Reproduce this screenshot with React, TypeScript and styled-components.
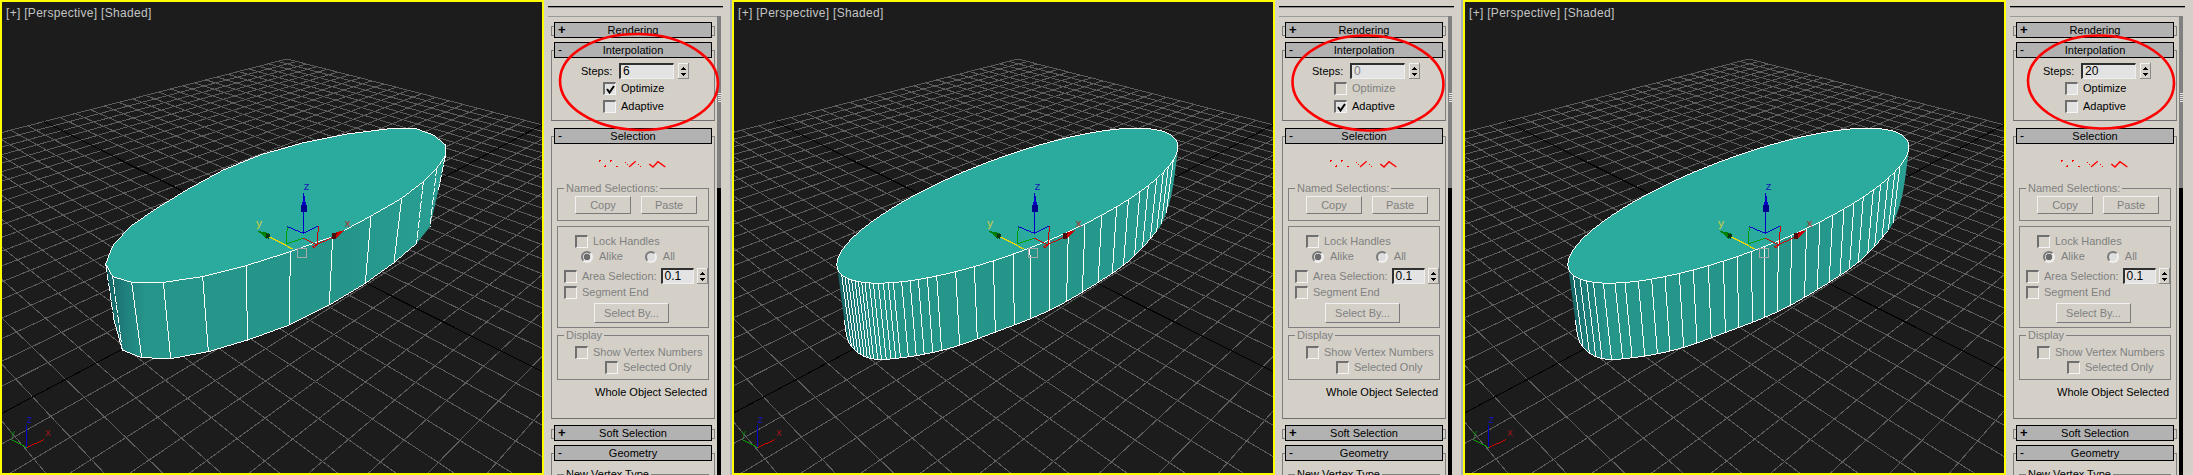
import React from 'react';
import styled, { createGlobalStyle } from 'styled-components';

const Global = createGlobalStyle`
  html, body { margin: 0; padding: 0; width: 2193px; height: 475px; overflow: hidden; background: #d4d0c8; }
  #root { width: 2193px; height: 475px; }
`;

const Page = styled.div`
  display: flex;
  width: 2193px;
  height: 475px;
  overflow: hidden;
  font-family: "Liberation Sans", Arial, sans-serif;
  font-size: 11px;
`;

const Unit = styled.section<{ $lead: boolean }>`
  display: flex;
  flex: 0 0 731px;
  height: 475px;
  box-sizing: border-box;
  padding-left: ${p => (p.$lead ? 1 : 0)}px;
  background: #a9aebc;
`;

const Viewport = styled.div`
  position: relative;
  flex: 1 1 0;
  min-width: 0;
  box-sizing: border-box;
  border: 2px solid #ffff00;
  background: #1c1c1c;
  overflow: hidden;
`;

const ViewLabel = styled.div`
  position: absolute;
  left: 4px;
  top: 4px;
  color: #c4c4c4;
  font-size: 12px;
  letter-spacing: 0.3px;
  line-height: 14px;
  white-space: pre;
`;

const Scene = styled.svg`
  display: block;
  width: 100%;
  height: 100%;
`;

const Panel = styled.aside<{ $strip: boolean }>`
  position: relative;
  flex: 0 0 187px;
  box-sizing: border-box;
  display: flex;
  flex-direction: column;
  background: #d4d0c8;
  border-right: ${p => (p.$strip ? 1 : 0)}px solid #a9aebc;
  color: #000;
`;

const Rule = styled.div`
  flex: none;
  width: 175px;
  height: 1px;
  margin: 6px 0 0 4px;
  background: #000;
  box-shadow: 0 1px 0 #8c8c8c;
`;

const PanelBody = styled.div`
  flex: 1 1 0;
  min-height: 0;
  display: flex;
  margin-top: 9px;
`;

const Column = styled.div`
  flex: 0 0 169px;
  margin-left: 4px;
  padding: 5px 0 0 3px;
  border-top: 1px solid #9a9a9a;
  box-sizing: border-box;
`;

const Track = styled.div`
  flex: 0 0 4px;
  display: flex;
  flex-direction: column;
  background: #000;
`;

const Thumb = styled.div`
  height: 172px;
  display: flex;
  align-items: center;
  justify-content: center;
  background: #808080;
`;

const Grip = styled.div`
  width: 3px;
  height: 10px;
  margin-bottom: 8px;
  background: repeating-linear-gradient(to bottom, #e8e8e8 0 1px, #808080 1px 2px);
`;

const Rollout = styled.div<{ $closed?: boolean; $gap: number }>`
  position: relative;
  width: 164px;
  margin-bottom: ${p => p.$gap}px;
  ${p =>
    p.$closed
      ? `&::before {
          content: '';
          position: absolute;
          left: 0; right: 0; top: 4px; height: 8px;
          border: 1px solid #7f7f7f;
        }`
      : ''}
`;

const Head = styled.div`
  position: relative;
  z-index: 1;
  height: 16px;
  box-sizing: border-box;
  margin: 0 3px;
  display: grid;
  grid-template-columns: 16px 1fr 16px;
  align-items: center;
  border: 1px solid #000;
  background: #b2b2b2;
  line-height: 14px;
`;

const Sign = styled.span<{ $open: boolean }>`
  padding-left: 3px;
  font-weight: ${p => (p.$open ? 400 : 700)};
  font-size: ${p => (p.$open ? 12 : 13)}px;
`;

const HeadText = styled.span`
  text-align: center;
  white-space: nowrap;
`;

const Body = styled.div<{ $height: number; $top: number }>`
  box-sizing: border-box;
  height: ${p => p.$height}px;
  margin-top: -8px;
  padding-top: ${p => p.$top}px;
  border: 1px solid #7f7f7f;
  border-bottom-color: #6e6e6e;
  overflow: hidden;
`;

const Row = styled.div<{ $indent: number; $after?: number; $h?: number }>`
  display: flex;
  align-items: center;
  height: ${p => p.$h ?? 13}px;
  padding-left: ${p => p.$indent}px;
  margin-bottom: ${p => p.$after ?? 0}px;
  white-space: nowrap;
`;

const Text = styled.span<{ $dim?: boolean; $gap?: number }>`
  margin-left: ${p => p.$gap ?? 5}px;
  color: ${p => (p.$dim ? '#808080' : '#000')};
  line-height: 13px;
`;

const StepsLabel = styled.span`
  width: 38px;
  color: #000;
`;

const Field = styled.div<{ $w: number; $dim?: boolean; $gap?: number }>`
  box-sizing: border-box;
  width: ${p => p.$w}px;
  height: 16px;
  margin-left: ${p => p.$gap ?? 0}px;
  padding: 0 0 0 2px;
  border-style: solid;
  border-width: 2px 1px 1px 2px;
  border-color: #303030 #efefef #efefef #303030;
  background: #e3e3e3;
  color: ${p => (p.$dim ? '#808080' : '#000')};
  font-size: 12px;
  line-height: 13px;
`;

const SpinBox = styled.svg<{ $gap: number }>`
  flex: none;
  display: block;
  width: 11px;
  height: 16px;
  margin-left: ${p => p.$gap}px;
`;

const Box = styled.div<{ $on?: boolean; $dim?: boolean }>`
  flex: none;
  box-sizing: border-box;
  width: 13px;
  height: 13px;
  border-style: solid;
  border-width: 2px 1px 1px 2px;
  border-color: #6f6f6f #f4f4f4 #f4f4f4 #6f6f6f;
  background: ${p => (p.$dim ? '#d4d0c8' : '#e2e2e2')};
  display: flex;
  align-items: center;
  justify-content: center;
`;

const Tick = styled.svg`
  display: block;
  width: 9px;
  height: 9px;
`;

const Radio = styled.div<{ $on?: boolean; $gap?: number }>`
  flex: none;
  box-sizing: border-box;
  width: 12px;
  height: 12px;
  margin-left: ${p => p.$gap ?? 0}px;
  border-radius: 50%;
  border: 2px solid;
  border-color: #7a7a7a #efefef #efefef #7a7a7a;
  background: ${p => (p.$on ? 'radial-gradient(circle, #6c6c6c 0 3px, #dcdcdc 3.5px)' : '#dedede')};
`;

const Group = styled.div<{ $height: number; $after: number; $top: number }>`
  position: relative;
  box-sizing: border-box;
  width: 152px;
  height: ${p => p.$height}px;
  margin: 0 0 ${p => p.$after}px 5px;
  padding-top: ${p => p.$top}px;
  border: 1px solid #7f7f7f;
`;

const Legend = styled.span<{ $dark?: boolean }>`
  position: absolute;
  left: 6px;
  top: -7px;
  padding: 0 2px;
  background: #d4d0c8;
  color: ${p => (p.$dark ? '#000' : '#808080')};
  line-height: 13px;
  white-space: nowrap;
`;

const Btn = styled.div<{ $w: number; $h: number; $gap?: number }>`
  flex: none;
  box-sizing: border-box;
  width: ${p => p.$w}px;
  height: ${p => p.$h}px;
  margin-left: ${p => p.$gap ?? 0}px;
  display: flex;
  align-items: center;
  justify-content: center;
  border-style: solid;
  border-width: 1px;
  border-color: #f1f1f1 #7a7a7a #7a7a7a #f1f1f1;
  color: #808080;
`;

const Icons = styled.svg`
  display: block;
  width: 68px;
  height: 10px;
  margin: 22px 0 19px 46px;
`;

const Status = styled.div`
  width: 155px;
  margin-top: 6px;
  text-align: right;
  color: #000;
  line-height: 13px;
  white-space: nowrap;
`;

const Halo = styled.svg`
  position: absolute;
  left: 0;
  top: 0;
  width: 187px;
  height: 160px;
  z-index: 2;
  pointer-events: none;
`;

type Pt = [number, number];

// ---------- grid ----------
const O: Pt = [304, 252];
const V1: Pt = [1017, -129];
const V2: Pt = [-469, -136];
const P0 = 0.5012;
const Q0 = 0.5065;
const N = 20;
const project = (u: number, v: number): Pt => {
  const p = (P0 / N) * u;
  const q = (Q0 / N) * v;
  const w = 1 + p + q;
  return [(O[0] + p * V1[0] + q * V2[0]) / w, (O[1] + p * V1[1] + q * V2[1]) / w];
};
const seg = (a: Pt, b: Pt) => `M${a[0].toFixed(1)} ${a[1].toFixed(1)}L${b[0].toFixed(1)} ${b[1].toFixed(1)}`;
const uLine = (i: number) => {
  const vMin = Math.max(-N, ((0.05 - 1 - (P0 * i) / N) * N) / Q0);
  return seg(project(i, vMin), project(i, N));
};
const vLine = (i: number) => {
  const uMin = Math.max(-N, ((0.05 - 1 - (Q0 * i) / N) * N) / P0);
  return seg(project(uMin, i), project(N, i));
};
let gridPath = '';
for (let i = -N; i <= N; i++) {
  if (i === 0) continue;
  gridPath += uLine(i) + vLine(i);
}
const axisPath = uLine(0) + vLine(0);

// ---------- object (coordinates are 3x, offset 90,120) ----------
const frontTop: Pt[] = [
  [47, 432], [68, 470], [125, 487], [220, 487], [338, 470], [468, 437], [601, 395],
  [728, 350], [843, 288], [935, 235], [1000, 185], [1040, 145], [1066, 108],
];
const frontBottom: Pt[] = [
  [72, 600], [97, 690], [155, 713], [242, 716], [355, 695], [473, 660], [598, 615],
  [718, 555], [826, 490], [912, 428], [980, 370], [1020, 320], [1045, 210],
];
const back: Pt[] = [
  [1067, 75], [1030, 45], [975, 25], [900, 26], [770, 42], [640, 68], [510, 105],
  [400, 150], [290, 210], [200, 265], [120, 320], [68, 378],
];

const toPath = (pts: Pt[], close = true) =>
  'M' + pts.map(p => `${p[0].toFixed(1)} ${p[1].toFixed(1)}`).join('L') + (close ? 'Z' : '');

const cr = (a: number, b: number, c: number, d: number, t: number) =>
  0.5 * (2 * b + (c - a) * t + (2 * a - 5 * b + 4 * c - d) * t * t + (3 * b - a - 3 * c + d) * t * t * t);

const spline = (pts: Pt[], steps = 8): Pt[] => {
  const out: Pt[] = [];
  const n = pts.length;
  for (let i = 0; i < n - 1; i++) {
    const a = pts[Math.max(0, i - 1)], b = pts[i], c = pts[i + 1], d = pts[Math.min(n - 1, i + 2)];
    for (let s = 0; s < steps; s++) {
      const t = s / steps;
      out.push([cr(a[0], b[0], c[0], d[0], t), cr(a[1], b[1], c[1], d[1], t)]);
    }
  }
  out.push(pts[n - 1]);
  return out;
};

// Smooth top cap: fitted ellipse. Lower rim: traced from the reference.
const topCap = (t: number): Pt => [
  559 + 511.5 * Math.cos(t),
  257 - 176.4 * Math.cos(t) + 151.5 * Math.sin(t),
];
const lowerRim = spline([
  [70, 600], [85, 670], [137, 712], [217, 716], [367, 690], [527, 635], [687, 570],
  [827, 490], [927, 420], [997, 345], [1027, 300], [1052, 220], [1068, 110],
]);

const rimY = (x: number) => {
  if (x <= lowerRim[0][0]) return lowerRim[0][1];
  for (let i = 1; i < lowerRim.length; i++) {
    const a = lowerRim[i - 1], b = lowerRim[i];
    if (x <= b[0]) return a[1] + ((b[1] - a[1]) * (x - a[0])) / Math.max(0.01, b[0] - a[0]);
  }
  return lowerRim[lowerRim.length - 1][1];
};

const clampCos = (c: number) => Math.max(-1, Math.min(1, c));

const sideLine = (x: number): [Pt, Pt] => {
  const top = topCap(Math.acos(clampCos((x - 559) / 511.5)));
  const bx = top[0] + 30 - 0.051 * (top[0] - 47);
  return [top, [bx, rimY(bx)]];
};

type Mode = 'faceted' | 'adaptive' | 'uniform';

const adaptiveTops = [
  62, 72, 82, 92, 102, 112, 122, 132, 145, 157, 172, 187, 202, 217, 242, 267, 292, 319, 347,
  404, 460, 517, 577, 627, 687, 742, 792, 842, 887, 922, 957, 982, 1007, 1027, 1042, 1057,
];
const uniformTops = [
  64, 84, 104, 124, 154, 189, 219, 259, 299, 339, 382, 424, 469, 514, 556, 599, 639, 679, 719,
  764, 804, 842, 876, 906, 934, 964, 986, 1009, 1029, 1044,
];

const SideGradient = ({ id }: { id: string }) => (
  <defs>
    <linearGradient id={id} gradientUnits="userSpaceOnUse" x1="47" y1="0" x2="1067" y2="0">
      <stop offset="0" stopColor="#165f62" />
      <stop offset="0.05" stopColor="#1e7d7a" />
      <stop offset="0.12" stopColor="#26968b" />
      <stop offset="0.7" stopColor="#25958a" />
      <stop offset="1" stopColor="#2a9f93" />
    </linearGradient>
  </defs>
);

const Faceted = ({ id }: { id: string }) => {
  const outline: Pt[] = [...frontTop, ...back];
  const side = [...frontTop, ...[...frontBottom].reverse()];
  return (
    <g transform="translate(90 120) scale(0.33333)">
      <SideGradient id={id} />
      <path d={toPath(side)} fill={`url(#${id})`} />
      {frontTop.map((a, i) => {
        const b = frontBottom[i];
        const edge = i < 2 || i > 9;
        return (
          <line
            key={i}
            x1={a[0]} y1={a[1]} x2={b[0]} y2={b[1]}
            stroke="#fff"
            strokeWidth={3}
            strokeDasharray={edge ? '24 5' : undefined}
            shapeRendering="crispEdges"
          />
        );
      })}
      <path d={toPath(frontBottom.slice(0, 11), false)} fill="none" stroke="#fff" strokeWidth={3} shapeRendering="crispEdges" />
      <path d={toPath(outline)} fill="#2bab9e" stroke="#fff" strokeWidth={3} shapeRendering="crispEdges" />
    </g>
  );
};

const Smooth = ({ tops, id }: { tops: number[]; id: string }) => {
  const rim: Pt[] = [];
  for (let k = 0; k <= 96; k++) rim.push(topCap((k / 96) * Math.PI * 2));
  const upper: Pt[] = [];
  for (let k = 0; k <= 48; k++) upper.push(topCap(Math.PI - (k / 48) * Math.PI));
  const back2 = [...lowerRim].reverse();
  const visible = lowerRim.filter(p => p[0] < 1010);
  return (
    <g transform="translate(90 120) scale(0.33333)">
      <SideGradient id={id} />
      <path d={toPath([...upper, ...back2])} fill={`url(#${id})`} />
      {tops.map(x => {
        const [a, b] = sideLine(x);
        return (
          <line key={x} x1={a[0]} y1={a[1]} x2={b[0]} y2={b[1]} stroke="#fff" strokeWidth={3} shapeRendering="crispEdges" />
        );
      })}
      <path d={toPath(visible, false)} fill="none" stroke="#fff" strokeWidth={3} shapeRendering="crispEdges" />
      <path d={toPath(rim)} fill="#2bab9e" stroke="#fff" strokeWidth={3} shapeRendering="crispEdges" />
    </g>
  );
};

const Gizmo = () => (
  <g transform="translate(230 170) scale(0.33333)" fontFamily="'Liberation Mono', monospace" fontSize="33" fill="none" strokeWidth="3" shapeRendering="crispEdges">
    <path d="M220 190V70" stroke="#0000c8" />
    <path d="M172 170L220 190L265 168" stroke="#0000c8" />
    <path d="M172 170L168 222L220 205" stroke="#00a000" />
    <path d="M265 168L262 225L220 205M262 225L248 235" stroke="#d00000" />
    <path d="M118 200L188 237" stroke="#e8d800" strokeWidth="4" />
    <path d="M310 200L245 232" stroke="#d00000" />
    <path d="M222 70L232 125H213Z" fill="#0000c8" />
    <path d="M213 105H232V125H213Z" fill="#000090" />
    <path d="M82 182L118 190L110 206Z" fill="#008000" />
    <path d="M108 190L122 194L116 206L106 204Z" fill="#0c3a10" />
    <path d="M345 180L318 206L308 190Z" fill="#c80000" />
    <path d="M306 190L320 190L318 206L306 206Z" fill="#4c0c0c" />
    <rect x="203" y="236" width="27" height="26" stroke="#a8a8a8" />
    <text x="220" y="60" fill="#1818b8" stroke="none">z</text>
    <text x="77" y="172" fill="#d8d040" stroke="none">y</text>
    <text x="343" y="172" fill="#b03030" stroke="none">x</text>
  </g>
);

const Tripod = () => (
  <g transform="translate(0 400) scale(0.33333)" fontFamily="'Liberation Sans', sans-serif" fontSize="26" fill="none" strokeWidth="3" shapeRendering="crispEdges">
    <path d="M80 143V75" stroke="#0000d0" />
    <path d="M80 143L33 118" stroke="#00a000" />
    <path d="M80 143L133 118" stroke="#d00000" />
    <text x="80" y="70" fill="#1818b8" stroke="none">Z</text>
    <text x="29" y="110" fill="#108010" stroke="none">Y</text>
    <text x="135" y="107" fill="#a01818" stroke="none">X</text>
  </g>
);

const SceneView = ({ mode, lead }: { mode: Mode; lead: boolean }) => (
  <Viewport>
    <Scene viewBox={lead ? '3 2 539 471' : '2 2 540 471'} preserveAspectRatio="none">
      <path d={gridPath} stroke="#5c5c5c" strokeWidth="1" fill="none" shapeRendering="crispEdges" />
      <path d={axisPath} stroke="#000" strokeWidth="1" fill="none" shapeRendering="crispEdges" />
      {mode === 'faceted' && <Faceted id="side-faceted" />}
      {mode === 'adaptive' && <Smooth tops={adaptiveTops} id="side-adaptive" />}
      {mode === 'uniform' && <Smooth tops={uniformTops} id="side-uniform" />}
      <Gizmo />
      <Tripod />
    </Scene>
    <ViewLabel>[+] [Perspective] [Shaded]</ViewLabel>
  </Viewport>
);

const Spinner = ({ gap }: { gap: number }) => (
  <SpinBox $gap={gap} viewBox="0 0 11 16" shapeRendering="crispEdges">
    <rect x="0.5" y="0.5" width="10" height="15" fill="#d4d0c8" stroke="#8a8a8a" />
    <path d="M0.5 15V0.5H10" fill="none" stroke="#f2f2f2" />
    <path d="M3 7L5.5 3.5L8 7Z" fill="#000" />
    <path d="M3 10L8 10L5.5 13Z" fill="#000" />
  </SpinBox>
);

const CheckBox = ({ on, dim }: { on?: boolean; dim?: boolean }) => (
  <Box $on={on} $dim={dim}>
    {on && (
      <Tick viewBox="0 0 9 9">
        <path d="M1 4L3.5 7.5L8 1" fill="none" stroke="#000" strokeWidth="2" />
      </Tick>
    )}
  </Box>
);

const SubObjectIcons = () => (
  <Icons viewBox="205 473 204 30">
    <g fill="#f00" shapeRendering="crispEdges">
      {[[210, 478], [243, 478], [227, 495], [262, 495]].map(([x, y]) => (
        <path key={x} d={`M${x - 3} ${y - 1}h6v2h-6zM${x - 1} ${y - 3}h2v6h-2z`} />
      ))}
      {[[287, 484], [293, 490], [325, 488], [333, 495]].map(([x, y]) => (
        <rect key={x} x={x - 1} y={y - 1} width="3" height="3" />
      ))}
    </g>
    <path d="M298 497L318 480" stroke="#f00" strokeWidth="4" fill="none" />
    <path d="M359 488L370 497L385 481L407 497" stroke="#f00" strokeWidth="4.5" fill="none" />
  </Icons>
);

type Config = {
  mode: Mode;
  steps: string;
  stepsDim?: boolean;
  optimize: boolean;
  optimizeDim?: boolean;
  adaptive: boolean;
  ring: { cx: number; cy: number; rx: number; ry: number };
};

const units: Config[] = [
  { mode: 'faceted', steps: '6', optimize: true, adaptive: false, ring: { cx: 95, cy: 82, rx: 79, ry: 48 } },
  { mode: 'adaptive', steps: '0', stepsDim: true, optimize: false, optimizeDim: true, adaptive: true, ring: { cx: 93, cy: 83, rx: 75.5, ry: 47.5 } },
  { mode: 'uniform', steps: '20', optimize: false, adaptive: false, ring: { cx: 95, cy: 82, rx: 73, ry: 46.5 } },
];

const ControlPanel = ({ c, strip }: { c: Config; strip: boolean }) => (
  <Panel $strip={strip}>
    <Rule />
    <PanelBody>
      <Column>
        <Rollout $closed $gap={4}>
          <Head><Sign $open={false}>+</Sign><HeadText>Rendering</HeadText></Head>
        </Rollout>
        <Rollout $gap={7}>
          <Head><Sign $open>-</Sign><HeadText>Interpolation</HeadText></Head>
          <Body $height={71} $top={12}>
            <Row $indent={29} $after={3} $h={16}>
              <StepsLabel>Steps:</StepsLabel>
              <Field $w={55} $dim={c.stepsDim}>{c.steps}</Field>
              <Spinner gap={4} />
            </Row>
            <Row $indent={51} $after={5}>
              <CheckBox on={c.optimize} dim={c.optimizeDim} />
              <Text $dim={c.optimizeDim}>Optimize</Text>
            </Row>
            <Row $indent={51}>
              <CheckBox on={c.adaptive} />
              <Text>Adaptive</Text>
            </Row>
          </Body>
        </Rollout>
        <Rollout $gap={6}>
          <Head><Sign $open>-</Sign><HeadText>Selection</HeadText></Head>
          <Body $height={283} $top={0}>
            <SubObjectIcons />
            <Group $height={33} $after={5} $top={7}>
              <Legend>Named Selections:</Legend>
              <Row $indent={17} $h={18}>
                <Btn $w={56} $h={18}>Copy</Btn>
                <Btn $w={56} $h={18} $gap={10}>Paste</Btn>
              </Row>
            </Group>
            <Group $height={102} $after={7} $top={8}>
              <Row $indent={17} $after={2}>
                <CheckBox dim /><Text $dim>Lock Handles</Text>
              </Row>
              <Row $indent={23} $after={5} $h={13}>
                <Radio $on /><Text $dim $gap={6}>Alike</Text>
                <Radio $gap={22} /><Text $dim $gap={6}>All</Text>
              </Row>
              <Row $indent={6} $after={2} $h={16}>
                <CheckBox dim /><Text $dim>Area Selection:</Text>
                <Field $w={33} $gap={4}>0.1</Field>
                <Spinner gap={3} />
              </Row>
              <Row $indent={6} $after={4}>
                <CheckBox dim /><Text $dim>Segment End</Text>
              </Row>
              <Row $indent={36} $h={20}>
                <Btn $w={75} $h={20}>Select By...</Btn>
              </Row>
            </Group>
            <Group $height={45} $after={0} $top={10}>
              <Legend>Display</Legend>
              <Row $indent={17} $after={3} $h={12}>
                <CheckBox dim /><Text $dim>Show Vertex Numbers</Text>
              </Row>
              <Row $indent={47} $h={12}>
                <CheckBox dim /><Text $dim>Selected Only</Text>
              </Row>
            </Group>
            <Status>Whole Object Selected</Status>
          </Body>
        </Rollout>
        <Rollout $closed $gap={4}>
          <Head><Sign $open={false}>+</Sign><HeadText>Soft Selection</HeadText></Head>
        </Rollout>
        <Rollout $gap={0}>
          <Head><Sign $open>-</Sign><HeadText>Geometry</HeadText></Head>
          <Body $height={40} $top={20}>
            <Group $height={30} $after={0} $top={0}>
              <Legend $dark>New Vertex Type</Legend>
            </Group>
          </Body>
        </Rollout>
      </Column>
      <Track>
        <Thumb><Grip /></Thumb>
      </Track>
    </PanelBody>
    <Halo viewBox="0 0 187 160">
      <ellipse cx={c.ring.cx} cy={c.ring.cy} rx={c.ring.rx} ry={c.ring.ry} fill="none" stroke="#f00" strokeWidth="2.6" transform={`rotate(1.5 ${c.ring.cx} ${c.ring.cy})`} />
    </Halo>
  </Panel>
);

export default function App() {
  return (
    <Page>
      <Global />
      {units.map((c, i) => (
        <Unit key={c.mode} $lead={i > 0}>
          <SceneView mode={c.mode} lead={i > 0} />
          <ControlPanel c={c} strip={i < 2} />
        </Unit>
      ))}
    </Page>
  );
}
